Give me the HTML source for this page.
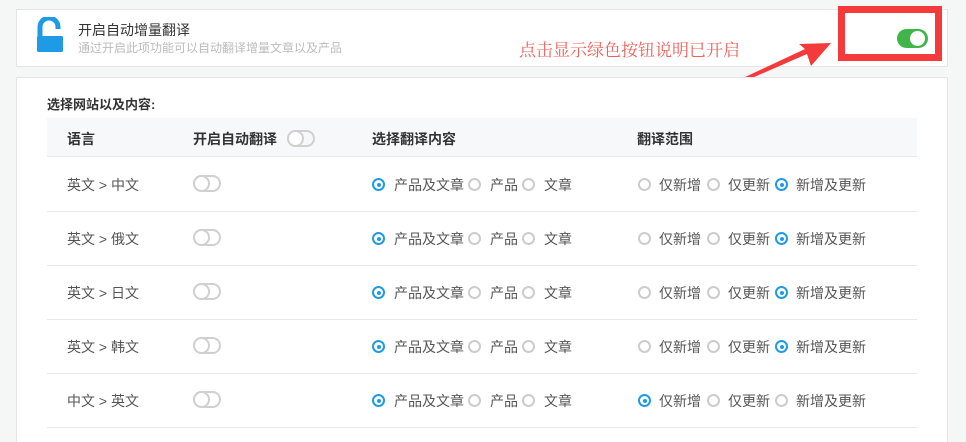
<!DOCTYPE html>
<html><head><meta charset="utf-8"><style>
*{margin:0;padding:0;box-sizing:border-box}
html,body{width:966px;height:442px;overflow:hidden}
body{background:#f5f6f6;font-family:"Liberation Sans","Noto Sans CJK SC",sans-serif;position:relative;color:#555}
.a{position:absolute;white-space:nowrap}
.card{position:absolute;background:#fff;border:1px solid #e3e5e6}
.t{font-size:14px;color:#555}
.tg{position:absolute;width:28px;height:17px;border:2px solid #d0d0d0;border-radius:9px}
.tg:after{content:"";position:absolute;left:-2px;top:-2px;width:17px;height:17px;border:2px solid #d0d0d0;border-radius:50%;box-sizing:border-box;background:#fff}
.r{position:absolute;width:13px;height:13px;border-radius:50%;border:2px solid #ccc}
.r.on{border-color:#1f9be6}
.r.on:after{content:"";position:absolute;left:2.5px;top:2.5px;width:4px;height:4px;border-radius:50%;background:#1f9be6}
.line{position:absolute;left:47px;width:870px;height:1px;background:#e8e8e8}
</style></head><body>
<div class="card" style="left:16px;top:9px;width:932px;height:58px"></div>
<svg class="a" style="left:36px;top:17px" width="28" height="36" viewBox="0 0 28 36">
<path d="M4 20 V10 A9 9 0 0 1 22 10 V12" fill="none" stroke="#1f9be6" stroke-width="5"/>
<rect x="1" y="19" width="26" height="16" rx="1.5" fill="#1f9be6"/></svg>
<div class="a" style="left:78px;top:20px;font-size:14px;color:#333">开启自动增量翻译</div>
<div class="a" style="left:78px;top:39px;font-size:12px;color:#bbb">通过开启此项功能可以自动翻译增量文章以及产品</div>
<div class="a" style="left:519px;top:36px;font-size:17px;color:#f0605a;font-family:'Noto Serif CJK SC',serif">点击显示绿色按钮说明已开启</div>
<div class="a" style="left:838px;top:6px;width:104px;height:55px;border:7px solid #f43a3a"></div>
<div class="a" style="left:897px;top:29px;width:31px;height:19px;border-radius:10px;background:#3fb54a"></div>
<div class="a" style="left:910px;top:31px;width:15px;height:15px;border-radius:50%;background:#fff"></div>
<svg class="a" style="left:735px;top:38px" width="100" height="46"><polygon points="10,43 72,16 76,28 96,5 64,6 70,11 8,40" fill="#f43a3a"/></svg>
<div class="card" style="left:16px;top:77px;width:932px;height:380px"></div>
<div class="a" style="left:47px;top:94px;font-size:13px;font-weight:bold;color:#333">选择网站以及内容:</div>
<div class="a" style="left:47px;top:118px;width:870px;height:39px;background:#f7f8fa;border-bottom:1px solid #e8e8e8"></div>
<div class="a t" style="left:67px;top:129px;font-weight:bold;color:#333">语言</div>
<div class="a t" style="left:193px;top:129px;font-weight:bold;color:#333">开启自动翻译</div>
<div class="tg" style="left:287px;top:130px"></div>
<div class="a t" style="left:372px;top:129px;font-weight:bold;color:#333">选择翻译内容</div>
<div class="a t" style="left:637px;top:129px;font-weight:bold;color:#333">翻译范围</div>

<div id="rows"></div>
<script>
var langs=["英文 &gt; 中文","英文 &gt; 俄文","英文 &gt; 日文","英文 &gt; 韩文","中文 &gt; 英文"];
var h="";
for(var i=0;i<5;i++){var c=184+54*i;var t=c-9;
var last=i==4;
h+='<div class="a t" style="left:67px;top:'+t+'px">'+langs[i]+'</div>';
h+='<div class="tg" style="left:193px;top:'+(c-9)+'px"></div>';
h+='<div class="r on" style="left:372px;top:'+(c-6)+'px"></div><div class="a t" style="left:394px;top:'+t+'px">产品及文章</div>';
h+='<div class="r" style="left:468px;top:'+(c-6)+'px"></div><div class="a t" style="left:490px;top:'+t+'px">产品</div>';
h+='<div class="r" style="left:522px;top:'+(c-6)+'px"></div><div class="a t" style="left:544px;top:'+t+'px">文章</div>';
h+='<div class="r'+(last?' on':'')+'" style="left:638px;top:'+(c-6)+'px"></div><div class="a t" style="left:659px;top:'+t+'px">仅新增</div>';
h+='<div class="r" style="left:707px;top:'+(c-6)+'px"></div><div class="a t" style="left:728px;top:'+t+'px">仅更新</div>';
h+='<div class="r'+(last?'':' on')+'" style="left:775px;top:'+(c-6)+'px"></div><div class="a t" style="left:796px;top:'+t+'px">新增及更新</div>';
h+='<div class="line" style="top:'+(c+27)+'px"></div>';}
document.getElementById("rows").innerHTML=h;
</script>
</body></html>
